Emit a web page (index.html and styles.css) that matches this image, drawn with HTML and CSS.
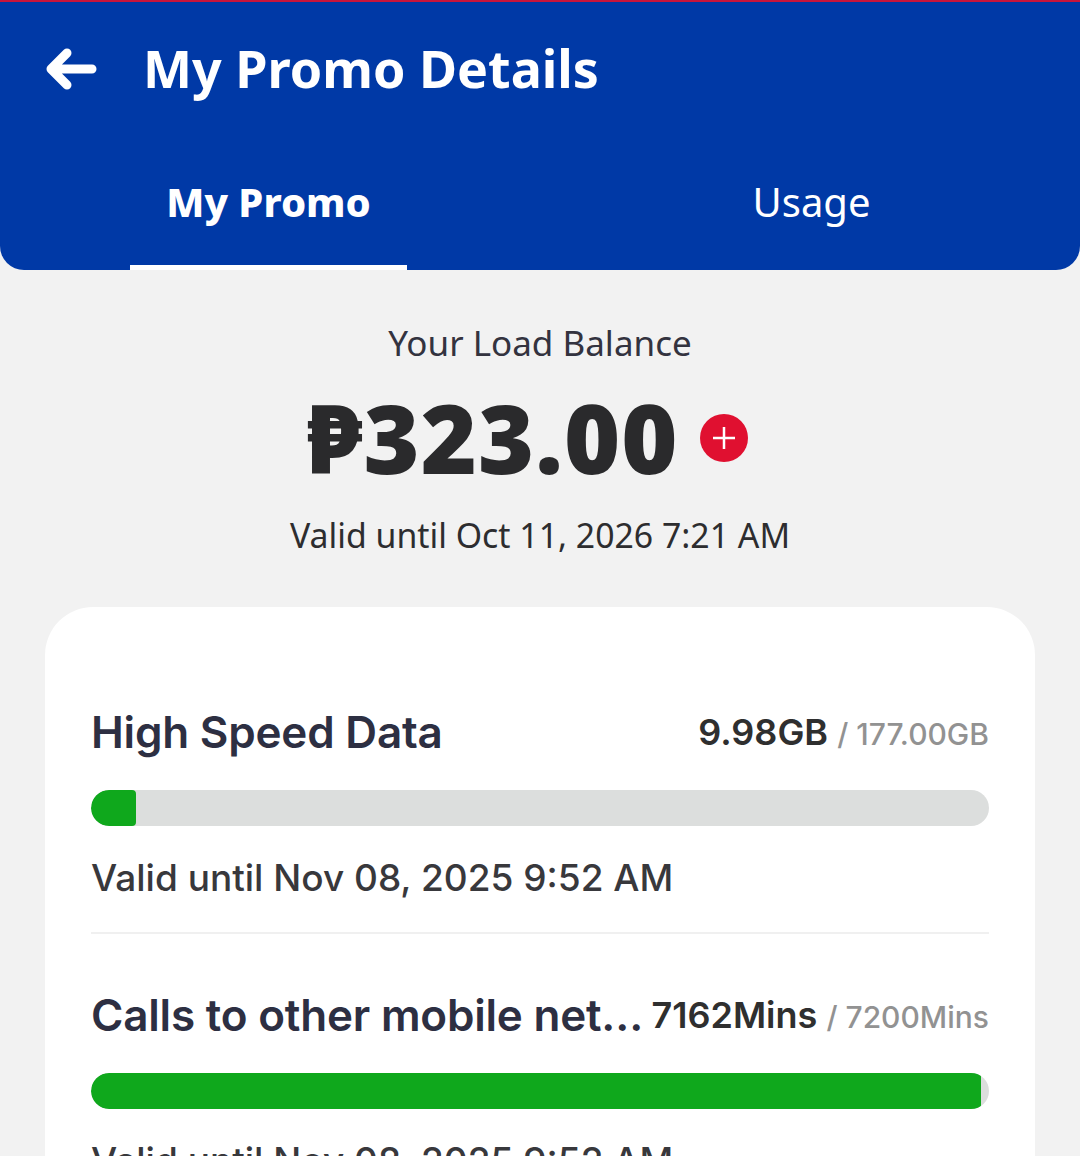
FILE: index.html
```html
<!DOCTYPE html>
<html lang="en">

<head>
    <meta charset="UTF-8">
    <meta name="viewport" content="width=device-width, initial-scale=1.0">
    <title>My Promo Details</title>

    <link rel="stylesheet" href="styles.css">
</head>

<body>
    <div class="top-bar">
        <div class="title-row">
            <svg class="back-icon" width="52" height="42" viewBox="0 0 52 42">
                <path d="M22 5 L6 21 L22 37 M6 21 H47" fill="none" stroke="#fff" stroke-width="9" stroke-linecap="round" stroke-linejoin="round"/>
            </svg>
            <h1 class="page-title">My Promo Details</h1>
        </div>
        <div class="tabs">
            <div class="tab tab-active">My Promo</div>
            <div class="tab">Usage</div>
        </div>
    </div>

    <div class="balance">
        <p class="balance-label">Your Load Balance</p>
        <div class="balance-row">
            <span class="balance-amount">₱323.00</span>
            <span class="add-button">
                <svg width="24" height="24" viewBox="0 0 24 24">
                    <path d="M12 1 V23 M1 12 H23" stroke="#fff" stroke-width="2.5"/>
                </svg>
            </span>
        </div>
        <p class="balance-valid">Valid until Oct 11, 2026 7:21 AM</p>
    </div>

    <div class="promo-card">
        <div class="promo-item">
            <div class="promo-head">
                <span class="promo-name">High Speed Data</span>
                <span class="promo-value">9.98GB <span class="promo-total">/ 177.00GB</span></span>
            </div>
            <div class="progress"><div class="progress-fill" style="width: 5%"></div></div>
            <p class="promo-valid">Valid until Nov 08, 2025 9:52 AM</p>
        </div>

        <div class="promo-item">
            <div class="promo-head">
                <span class="promo-name">Calls to other mobile net…</span>
                <span class="promo-value">7162Mins <span class="promo-total">/ 7200Mins</span></span>
            </div>
            <div class="progress"><div class="progress-fill" style="width: 99.1%"></div></div>
            <p class="promo-valid">Valid until Nov 08, 2025 9:52 AM</p>
        </div>
    </div>
</body>

</html>
```

FILE: styles.css
```css
html, body {
    height: 100%;
    overflow: hidden;
}

body {
    margin: 0;
    font-family: "Noto Sans", Arial, sans-serif;
    background-color: #f2f2f2;
}

.top-bar {
    height: 268px;
    background-color: #0039a6;
    border-top: 2px solid #c8153c;
    border-radius: 0 0 24px 24px;
    color: white;
    display: flex;
    flex-direction: column;
    overflow: hidden;
}

.title-row {
    display: flex;
    align-items: center;
    height: 134px;
    padding-left: 45px;
}

.back-icon {
    margin-right: 46px;
}

.page-title {
    margin: 0 0 3px;
    font-size: 52px;
    font-weight: 700;
}

.tabs {
    display: flex;
    flex: 1;
    padding-left: 130px;
}

.tab {
    width: 277px;
    font-size: 40px;
    text-align: center;
    line-height: 132px;
    height: 134px;
}

.tab + .tab {
    margin-left: 266px;
}

.tab-active {
    font-size: 40px;
    font-weight: 800;
    border-bottom: 5px solid white;
    box-sizing: border-box;
}

.balance {
    text-align: center;
    color: #2b2b35;
}

.balance-label {
    margin: 52px 0 0;
    font-size: 35px;
    line-height: 42px;
    color: #33333f;
}

.balance-row {
    display: flex;
    align-items: center;
    justify-content: center;
    margin-top: 24px;
    padding-right: 24px;
    height: 96px;
}

.balance-amount {
    font-size: 96px;
    font-weight: 900;
    letter-spacing: 1px;
    color: #2a2a2c;
}

.add-button {
    width: 48px;
    height: 48px;
    margin-top: 4px;
    margin-left: 22px;
    border-radius: 50%;
    background-color: #e01030;
    display: flex;
    align-items: center;
    justify-content: center;
}

.balance-valid {
    margin: 28px 0 0;
    font-size: 33.8px;
    line-height: 46px;
    color: #2d2d2f;
}

.promo-card {
    margin: 49px 45px 0;
    padding: 91px 46px 0;
    background: white;
    border-radius: 48px;
}

.promo-item + .promo-item {
    margin-top: 47px;
}

.promo-item {
    border-bottom: 2px solid #f0f0f0;
    height: 234px;
}

.promo-head {
    display: flex;
    align-items: center;
    justify-content: space-between;
    height: 68px;
}

.promo-name {
    font-family: Inter, "Noto Sans", sans-serif;
    font-size: 44px;
    font-weight: 600;
    letter-spacing: -0.2px;
    color: #2d2f42;
    white-space: nowrap;
}

.promo-value {
    font-family: Inter, "Noto Sans", sans-serif;
    font-size: 36px;
    font-weight: 600;
    color: #2f2f2f;
    white-space: nowrap;
}

.promo-total {
    font-size: 30px;
    font-weight: 500;
    color: #929292;
}

.progress {
    margin-top: 24px;
    height: 36px;
    border-radius: 18px;
    background-color: #dcdedd;
    overflow: hidden;
}

.progress-fill {
    height: 100%;
    background-color: #0fa81c;
    border-radius: 18px 4px 4px 18px;
}

.promo-valid {
    margin: 26px 0 0;
    font-family: Inter, "Noto Sans", sans-serif;
    font-size: 37px;
    font-weight: 500;
    line-height: 52px;
    color: #38383c;
}
```
